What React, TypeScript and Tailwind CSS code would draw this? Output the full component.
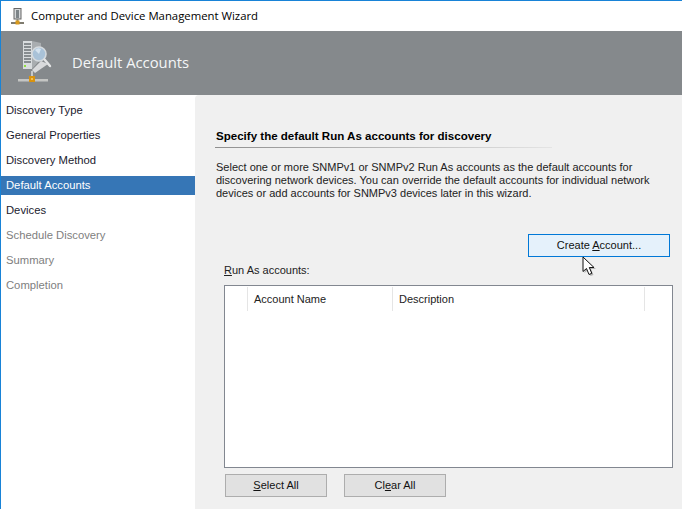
const STEPS = [
  { name: "Discovery Type", tone: "text-[#1a1a2e]" },
  { name: "General Properties", tone: "text-[#1a1a2e]" },
  { name: "Discovery Method", tone: "text-[#1a1a2e]" },
  { name: "Default Accounts", tone: "bg-[#3676b6] text-white" },
  { name: "Devices", tone: "text-[#1a1a2e]" },
  { name: "Schedule Discovery", tone: "text-[#808080]" },
  { name: "Summary", tone: "text-[#808080]" },
  { name: "Completion", tone: "text-[#808080]" },
]

function TitleIcon() {
  return (
    <svg width="13" height="17" viewBox="0 0 13 17">
      <rect x="3" y="0.5" width="7" height="10.5" fill="#d5d8da" stroke="#666" strokeWidth="1" />
      <rect x="5" y="2" width="3" height="8" fill="#7d8488" />
      <rect x="5.5" y="11" width="2" height="2" fill="#8a8a80" />
      <rect x="0" y="14" width="13" height="2" fill="#7f7b6e" />
      <rect x="4.5" y="12.5" width="4" height="4" fill="#d99a1c" />
    </svg>
  )
}

function HeaderIcon() {
  return (
    <svg width="38" height="44" viewBox="0 0 38 44">
      <rect x="5" y="0" width="9" height="28" fill="#d9dcde" />
      <path d="M14 0 L23 2 L23 18 L14 28 Z" fill="#a9adb0" />
      <path d="M6 3h7M6 6h7M6 9h7M6 12h7M6 15h7M6 18h7M6 21h7" stroke="#6c7276" strokeWidth="1.3" />
      <rect x="6" y="24" width="2" height="2" fill="#8fe03c" />
      <path d="M14 29 L23 20 L30 23 L17 32 Z" fill="#e8e9ea" opacity="0.85" />
      <circle cx="21" cy="13" r="7" fill="#a9c2d8" stroke="#d5dade" strokeWidth="1.6" />
      <path d="M17 9 a5 5 0 0 1 6 -1 L21 13 Z" fill="#d4e2ee" />
      <path d="M26.5 18.5 L32 25" stroke="#e4e5e6" strokeWidth="2.4" strokeLinecap="round" />
      <rect x="13" y="30" width="2" height="6" fill="#c7c9ca" />
      <rect x="0" y="38" width="30" height="2.5" fill="#c4c5c3" />
      <rect x="11" y="35" width="6" height="6" fill="#d9930f" />
      <rect x="13" y="37" width="2" height="2" fill="#f4c04e" />
    </svg>
  )
}

function Cursor() {
  return (
    <svg className="absolute left-[581px] top-[255px]" width="18" height="22" viewBox="0 0 18 22">
      <path d="M2.5 3 L2.5 17 L6 14 L8.5 20 L11.5 19 L9 13 L14 13 Z" fill="#000" opacity="0.25" />
      <path d="M1 1 L1 15.5 L4.5 12.5 L7 18.5 L9.8 17.3 L7.3 11.5 L12 11.5 Z" fill="#fff" stroke="#111" strokeWidth="1" />
    </svg>
  )
}

function App() {
  return (
    <div className="relative h-[509px] w-[682px] overflow-hidden border-t border-l border-[#1883d7] bg-white font-['Liberation_Sans',sans-serif] text-[11px] text-[#111]">
      <div className="flex h-[30px] items-center gap-[7px] pl-[10px] font-['Open_Sans',sans-serif] text-[11.35px] text-black">
        <TitleIcon />
        <span className="pb-[1px]">Computer and Device Management Wizard</span>
      </div>

      <div className="flex h-[64px] items-center gap-[16px] bg-[#85898c] pl-[17px]">
        <HeaderIcon />
        <span className="pb-[2px] font-['Open_Sans',sans-serif] text-[14.8px] text-[#f4f6f7]">Default Accounts</span>
      </div>

      <div className="flex h-[414px]">
        <ul className="flex w-[194px] shrink-0 flex-col gap-[6px] pt-[6px] text-[11.25px]">
          {STEPS.map((step) => (
            <li key={step.name} className={`flex h-[19px] items-center pl-[5px] ${step.tone}`}>
              {step.name}
            </li>
          ))}
        </ul>

        <div className="flex-1 rounded-tl-[4px] bg-[#f0f0f0] pl-[20px] pt-[34px]">
          <h2 className="w-[337px] pb-[4px] pl-[1px] text-[11.55px] leading-[14px] font-bold text-black">
            Specify the default Run As accounts for discovery
          </h2>
          <div className="h-px w-[337px] bg-gradient-to-r from-[#8f8f8f] to-[#e4e4e4]" />

          <p className="mt-[13px] w-[450px] pl-[1px] text-[11px] leading-[13px] text-[#222]">
            Select one or more SNMPv1 or SNMPv2 Run As accounts as the default accounts for
            <br />
            discovering network devices. You can override the default accounts for individual network
            <br />
            devices or add accounts for SNMPv3 devices later in this wizard.
          </p>

          <div className="mt-[34px] flex justify-start pl-[313px]">
            <button className="h-[23px] w-[142px] border border-[#0078d7] bg-[#e5f1fb] text-[11px] text-[#111]">
              Create <u>A</u>ccount...
            </button>
          </div>

          <div className="mt-[6px] pl-[9px] leading-[14px] text-[#222]">
            <u>R</u>un As accounts:
          </div>

          <div className="mt-[8px] ml-[9px] h-[183px] w-[449px] border border-[#828790] bg-white">
            <div className="mt-[1px] flex h-[24px] items-center">
              <div className="h-full w-[23px] border-r border-[#e5e5e5]" />
              <div className="flex h-full w-[145px] items-center border-r border-[#e5e5e5] pl-[6px] text-[#222]">Account Name</div>
              <div className="flex h-full w-[252px] items-center border-r border-[#e5e5e5] pl-[6px] text-[#222]">Description</div>
            </div>
          </div>

          <div className="mt-[6px] ml-[10px] flex gap-[17px]">
            <button className="h-[23px] w-[102px] border border-[#adadad] bg-[#e1e1e1] text-[11px] text-[#111]">
              <u>S</u>elect All
            </button>
            <button className="h-[23px] w-[102px] border border-[#adadad] bg-[#e1e1e1] text-[11px] text-[#111]">
              Cl<u>e</u>ar All
            </button>
          </div>
        </div>
      </div>

      <Cursor />
    </div>
  )
}

export default App
